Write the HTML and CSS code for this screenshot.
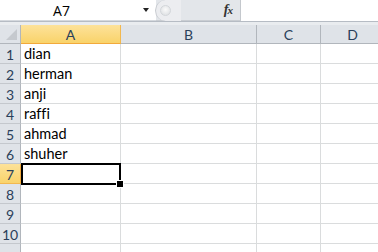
FILE: index.html
```html
<!DOCTYPE html>
<html lang="en">
<head>
  <meta charset="UTF-8" />
  <title>Sheet1</title>
  <link rel="stylesheet" href="styles.css">
</head>
<body>
  <div class="formula-bar">
    <div class="name-box">
      <span class="name">A7</span>
      <span class="arrow"></span>
    </div>
    <div class="fx-area">
      <span class="grip"><span class="dot"></span></span>
      <span class="fx"><i>f</i><i class="x">x</i></span>
    </div>
    <div class="formula-input"></div>
  </div>
  <div class="gap"></div>

  <div class="sheet">
    <div class="corner"></div>
    <div class="col-head active">A</div>
    <div class="col-head">B</div>
    <div class="col-head">C</div>
    <div class="col-head">D</div>

    <div class="row-head">1</div><div class="cell">dian</div><div class="cell"></div><div class="cell"></div><div class="cell"></div>
    <div class="row-head">2</div><div class="cell">herman</div><div class="cell"></div><div class="cell"></div><div class="cell"></div>
    <div class="row-head">3</div><div class="cell">anji</div><div class="cell"></div><div class="cell"></div><div class="cell"></div>
    <div class="row-head">4</div><div class="cell">raffi</div><div class="cell"></div><div class="cell"></div><div class="cell"></div>
    <div class="row-head">5</div><div class="cell">ahmad</div><div class="cell"></div><div class="cell"></div><div class="cell"></div>
    <div class="row-head">6</div><div class="cell">shuher</div><div class="cell"></div><div class="cell"></div><div class="cell"></div>
    <div class="row-head active">7</div><div class="cell selected"><span class="handle"></span></div><div class="cell"></div><div class="cell"></div><div class="cell"></div>
    <div class="row-head">8</div><div class="cell"></div><div class="cell"></div><div class="cell"></div><div class="cell"></div>
    <div class="row-head">9</div><div class="cell"></div><div class="cell"></div><div class="cell"></div><div class="cell"></div>
    <div class="row-head">10</div><div class="cell"></div><div class="cell"></div><div class="cell"></div><div class="cell"></div>
    <div class="row-head"></div><div class="cell"></div><div class="cell"></div><div class="cell"></div><div class="cell"></div>
  </div>
</body>
</html>
```

FILE: styles.css
```css
* { box-sizing: border-box; }
html, body {
  margin: 0; padding: 0;
  width: 378px; height: 252px;
  overflow: hidden;
  background: #fff;
  font-family: Lato, "Open Sans", sans-serif;
  font-variant-ligatures: none;
}

/* formula bar */
.formula-bar {
  display: flex;
  height: 22px;
  border-bottom: 1px solid #b6bcc4;
  background: #fff;
}
.name-box {
  width: 156px;
  height: 21px;
  display: flex; align-items: center;
  border-bottom: 1px solid #d5d9de;
}
.name {
  flex: 1;
  text-align: center;
  font-family: "Open Sans", sans-serif;
  font-size: 14px;
  color: #000;
  padding-right: 20px;
}
.arrow {
  width: 0; height: 0;
  border-left: 3.5px solid transparent;
  border-right: 3.5px solid transparent;
  border-top: 4px solid #222;
  margin-right: 7px;
}
.fx-area {
  width: 85px;
  height: 21px;
  display: flex; align-items: center; justify-content: space-between;
  background: #e3e6ea;
  border-right: 1px solid #c4c8cd;
  border-bottom: 1px solid #c9cdd2;
}
.grip {
  width: 26px; height: 21px;
  margin-left: -1px;
  background: #ecedf0;
  border-radius: 11px 0 0 11px;
  border-left: 1px solid #c6cacf;
  display: flex; align-items: center; padding-left: 4px;
}
.dot {
  width: 11px; height: 11px; border-radius: 50%;
  background: radial-gradient(circle at 50% 40%, #fafafa, #d9dcdf);
  border: 1px solid #d3d6da;
}
.fx {
  font-family: "Liberation Serif", serif;
  font-size: 14px;
  font-weight: bold;
  color: #333;
  margin-right: 8px;
  letter-spacing: -1px;
}
.fx .x { font-size: 11px; }
.formula-input {
  flex: 1;
  background: #fff;
}
.gap {
  height: 3px;
  background: #e9ecef;
}

/* grid */
.sheet {
  display: grid;
  grid-template-columns: 21px 100px 136px 64px 64px;
  grid-template-rows: 19px;
  grid-auto-rows: 20px;
}
.corner {
  background: #dfe3e8;
  border-right: 1px solid #b1b6bc;
  border-bottom: 1px solid #b1b6bc;
  position: relative;
}
.corner::after {
  content: "";
  position: absolute;
  right: 3px; bottom: 3px;
  border-left: 11px solid transparent;
  border-bottom: 11px solid #c5c9ce;
}
.col-head, .row-head {
  background: #dfe3e8;
  color: #2a3f5a;
  font-size: 14px;
  display: flex; align-items: center; justify-content: center;
  border-right: 1px solid #b1b6bc;
  border-bottom: 1px solid #b1b6bc;
}
.col-head { padding-top: 1px; }
.row-head { border-bottom-color: #c4c8cd; padding-top: 1px; }
.col-head.active {
  background: linear-gradient(#fde29a, #f9d36a);
  border-bottom: 1px solid #f2a93b;
  border-right-color: #f2b84f;
}
.row-head.active {
  background: linear-gradient(#fde29a, #f9d36a);
  border-right: 1px solid #f2a93b;
  border-bottom-color: #f2b84f;
}
.cell {
  border-right: 1px solid #dadcdd;
  border-bottom: 1px solid #dadcdd;
  font-size: 14.5px;
  color: #000;
  padding: 0 3px;
  display: flex; align-items: flex-end;
  padding-bottom: 1px;
  white-space: nowrap;
}
.cell.selected {
  position: relative;
}
.cell.selected::before {
  content: "";
  position: absolute;
  left: 0; top: -1px; right: -1px; bottom: -2px;
  border: 2px solid #000;
}
.handle {
  position: absolute;
  right: -3px; bottom: -4px;
  width: 6px; height: 6px;
  background: #000;
  outline: 1px solid #fff;
}
```
